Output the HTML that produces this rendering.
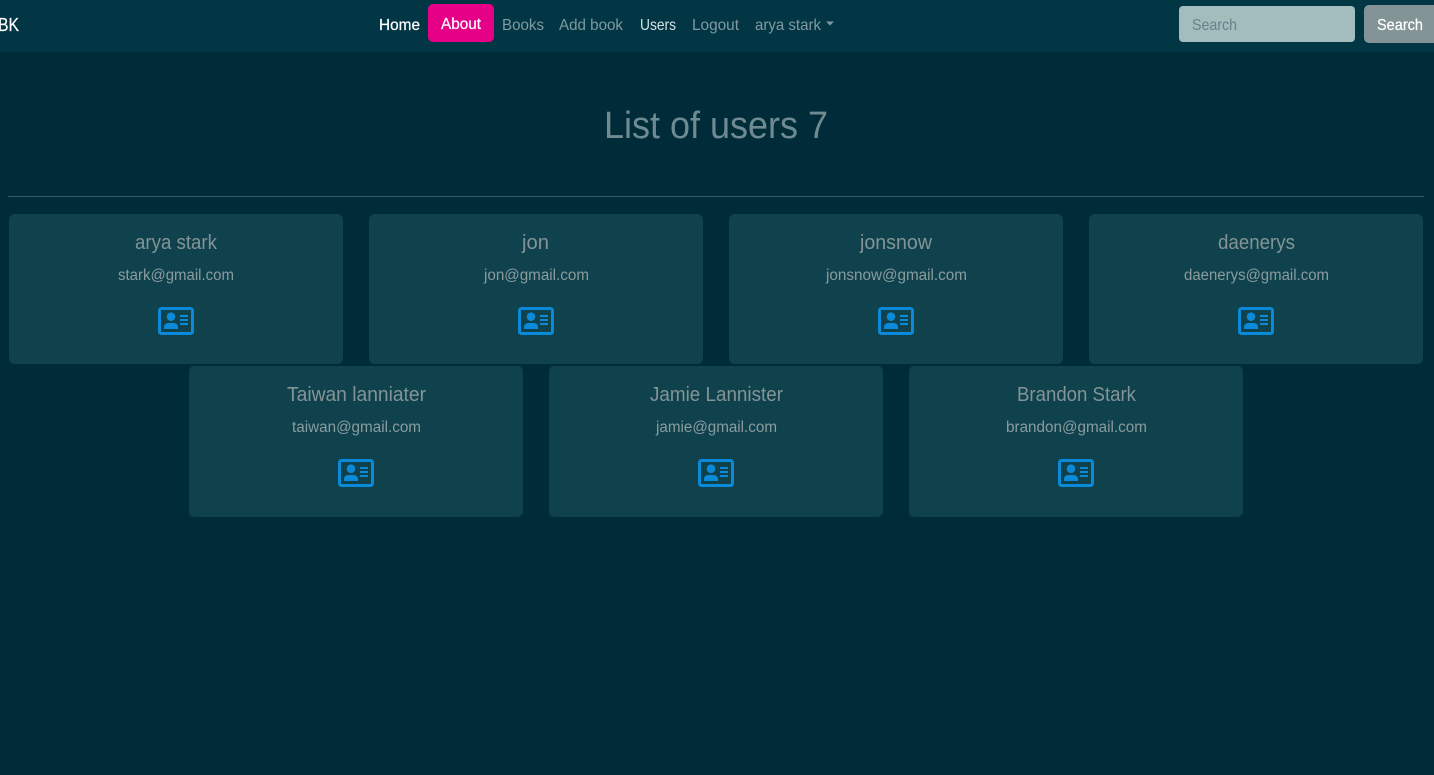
<!DOCTYPE html>
<html lang="en">
<head>
<meta charset="utf-8">
<title>List of users</title>
<style>
html,body{margin:0;padding:0;width:1434px;height:775px;overflow:hidden;background:#002b39;}
svg{display:block;position:absolute;left:0;top:0;}
text{font-family:"Liberation Sans",sans-serif;}
.nav{font-size:16px;fill:#7f9aa0;}
.w{fill:#fff;stroke:#fff;stroke-width:.2px;}
.n{font-size:20px;fill:#839496;}
.e{font-size:15.5px;fill:#8a9c9e;}
</style>
</head>
<body>
<svg width="1434" height="775" viewBox="0 0 1434 775" xmlns="http://www.w3.org/2000/svg">
<defs>
<g id="ic">
<rect x="1.500" y="1.500" width="33" height="25" rx="2" fill="none" stroke="#0a8ad8" stroke-width="3"/>
<circle cx="13" cy="9.700" r="4.300" fill="#0a8ad8"/>
<path d="M6 22v-2C6 17.500 8 16 10.500 16h5c2.500 0 4.500 1.500 4.500 4v2z" fill="#0a8ad8"/>
<rect x="22" y="8" width="8" height="2" fill="#0a8ad8"/>
<rect x="22" y="12" width="8" height="2" fill="#0a8ad8"/>
<rect x="22" y="16" width="8" height="2" fill="#0a8ad8"/>
</g>
</defs>
<rect width="1434" height="775" fill="#002b39"/>
<rect width="1434" height="52" fill="#033644"/>
<text x="-2" y="31" font-size="18" class="w" textLength="21" lengthAdjust="spacingAndGlyphs">BK</text>
<text x="379" y="30" class="nav w" textLength="41" lengthAdjust="spacingAndGlyphs">Home</text>
<rect x="428" y="4" width="66" height="38" rx="5" fill="#e60088"/>
<text x="441" y="29" class="nav w" textLength="40" lengthAdjust="spacingAndGlyphs">About</text>
<text x="502" y="30" class="nav" textLength="42" lengthAdjust="spacingAndGlyphs">Books</text>
<text x="559" y="30" class="nav" textLength="64" lengthAdjust="spacingAndGlyphs">Add book</text>
<text x="640" y="30" class="nav" style="fill:#d5e2e4" textLength="36" lengthAdjust="spacingAndGlyphs">Users</text>
<text x="692" y="30" class="nav" textLength="47" lengthAdjust="spacingAndGlyphs">Logout</text>
<text x="755" y="30" class="nav" textLength="66" lengthAdjust="spacingAndGlyphs">arya stark</text>
<path d="M826 21.500h8l-4 4z" fill="#7f9aa0"/>
<rect x="1179" y="6" width="176" height="36" rx="4" fill="#a3bdbc"/>
<text x="1192" y="30" class="nav" style="fill:#65818a" textLength="45" lengthAdjust="spacingAndGlyphs">Search</text>
<rect x="1364" y="5" width="80" height="38" rx="5" fill="#839496"/>
<text x="1377" y="30" class="nav w" textLength="46" lengthAdjust="spacingAndGlyphs">Search</text>

<text x="604" y="138" font-size="38" fill="#6f8b92" textLength="224" lengthAdjust="spacingAndGlyphs">List of users 7</text>
<rect x="8" y="196" width="1416" height="1" fill="#2f5a66"/>

<g fill="#0f424d">
<rect x="9" y="214" width="334" height="150" rx="5"/>
<rect x="369" y="214" width="334" height="150" rx="5"/>
<rect x="729" y="214" width="334" height="150" rx="5"/>
<rect x="1089" y="214" width="334" height="150" rx="5"/>
<rect x="189" y="366" width="334" height="151" rx="5"/>
<rect x="549" y="366" width="334" height="151" rx="5"/>
<rect x="909" y="366" width="334" height="151" rx="5"/>
</g>

<text x="135" y="249" class="n" textLength="82" lengthAdjust="spacingAndGlyphs">arya stark</text>
<text x="118" y="280" class="e" textLength="116" lengthAdjust="spacingAndGlyphs">stark@gmail.com</text>
<use href="#ic" x="158" y="307"/>

<text x="522" y="249" class="n" textLength="27" lengthAdjust="spacingAndGlyphs">jon</text>
<text x="484" y="280" class="e" textLength="105" lengthAdjust="spacingAndGlyphs">jon@gmail.com</text>
<use href="#ic" x="518" y="307"/>

<text x="860" y="249" class="n" textLength="72" lengthAdjust="spacingAndGlyphs">jonsnow</text>
<text x="826" y="280" class="e" textLength="141" lengthAdjust="spacingAndGlyphs">jonsnow@gmail.com</text>
<use href="#ic" x="878" y="307"/>

<text x="1218" y="249" class="n" textLength="77" lengthAdjust="spacingAndGlyphs">daenerys</text>
<text x="1184" y="280" class="e" textLength="145" lengthAdjust="spacingAndGlyphs">daenerys@gmail.com</text>
<use href="#ic" x="1238" y="307"/>

<text x="287" y="401" class="n" textLength="139" lengthAdjust="spacingAndGlyphs">Taiwan lanniater</text>
<text x="292" y="432" class="e" textLength="129" lengthAdjust="spacingAndGlyphs">taiwan@gmail.com</text>
<use href="#ic" x="338" y="459"/>

<text x="650" y="401" class="n" textLength="133" lengthAdjust="spacingAndGlyphs">Jamie Lannister</text>
<text x="656" y="432" class="e" textLength="121" lengthAdjust="spacingAndGlyphs">jamie@gmail.com</text>
<use href="#ic" x="698" y="459"/>

<text x="1017" y="401" class="n" textLength="119" lengthAdjust="spacingAndGlyphs">Brandon Stark</text>
<text x="1006" y="432" class="e" textLength="141" lengthAdjust="spacingAndGlyphs">brandon@gmail.com</text>
<use href="#ic" x="1058" y="459"/>
</svg>
</body>
</html>
